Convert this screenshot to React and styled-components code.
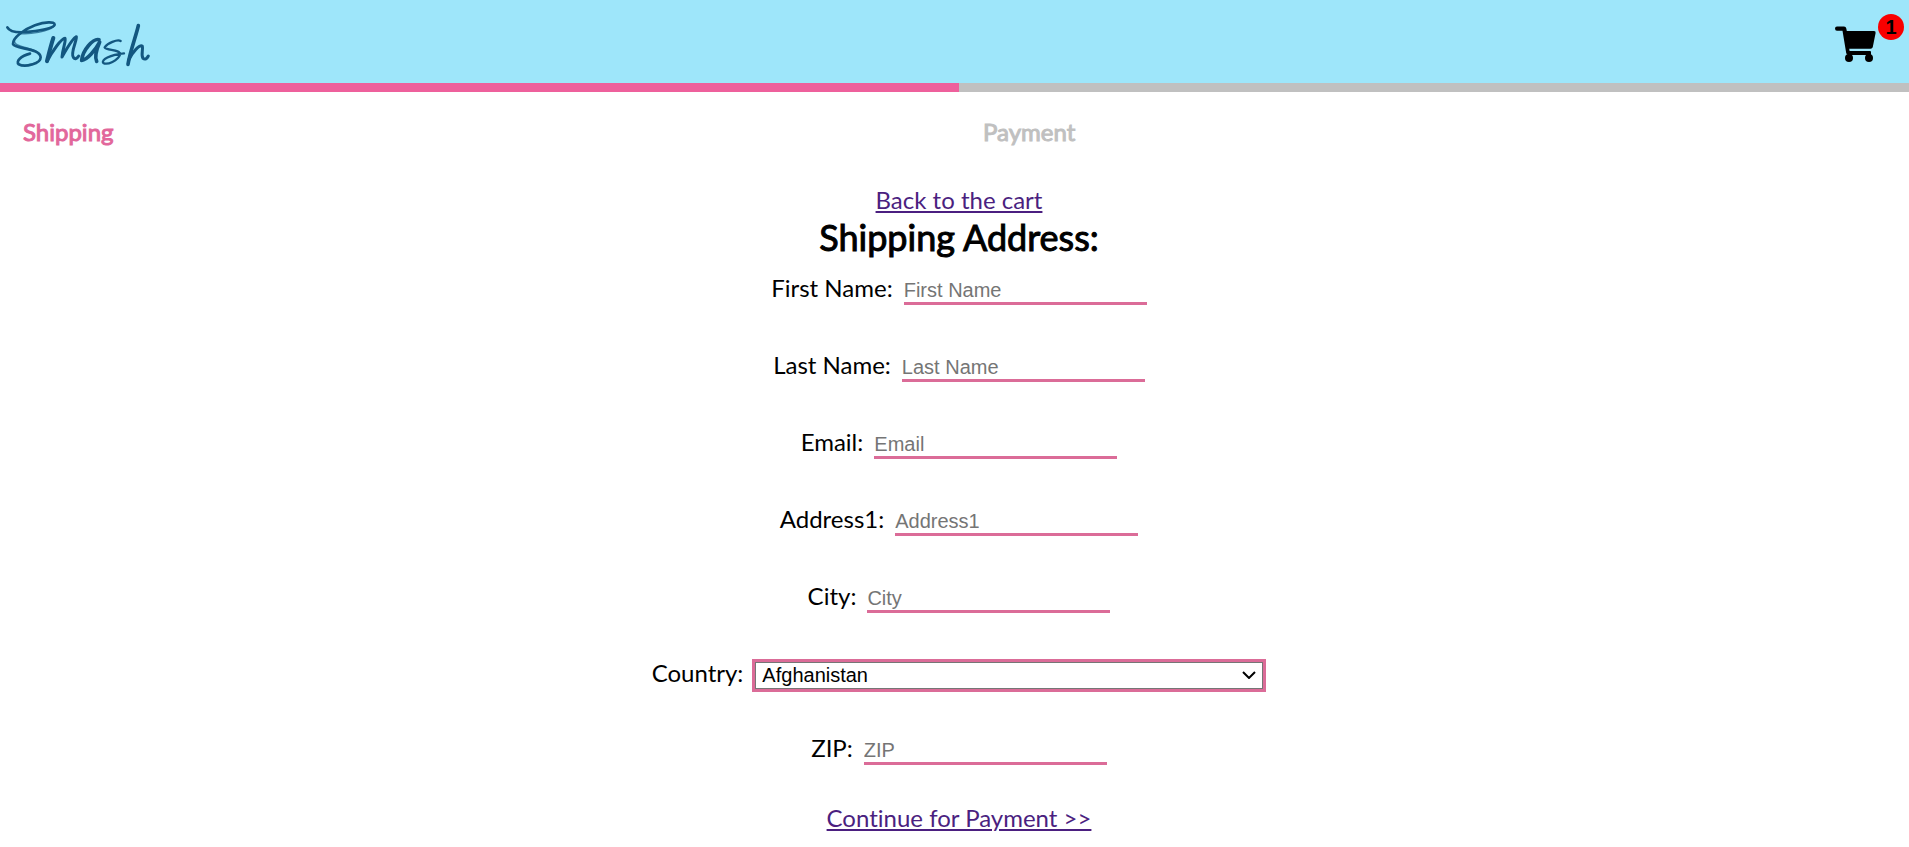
import React from "react";
import styled, { createGlobalStyle } from "styled-components";

const pink = "#db6c98";
const barPink = "#ee609c";

const GlobalStyle = createGlobalStyle`
  * { box-sizing: border-box; }
  body {
    margin: 0;
    background: #fff;
    color: #000;
    font-family: Lato, "Liberation Sans", sans-serif;
    font-size: 24px;
    line-height: 30px;
    font-variant-ligatures: none;
  }
`;

const Header = styled.header`
  display: flex;
  align-items: flex-start;
  justify-content: space-between;
  height: 83px;
  padding: 14px 5px 0 0;
  background: #9ee6fa;
`;

const LogoLink = styled.a`
  display: block;
  svg { display: block; }
`;

const CartButton = styled.button`
  display: flex;
  align-items: flex-start;
  gap: 2px;
  padding: 0;
  border: 0;
  background: none;
  color: #000;
  svg { margin-top: 12px; }
`;

const CartBadge = styled.span`
  width: 26px;
  height: 26px;
  border-radius: 50%;
  background: #f80000;
  font: 700 20px/26px "Liberation Sans", sans-serif;
  text-align: center;
`;

const Progress = styled.div`
  display: flex;
  height: 9px;
  padding-left: 9px;
  background: ${barPink};
`;

const ProgressPart = styled.div`
  flex: 1;
  background: ${({ $done }) => ($done ? barPink : "#c0c0c0")};
`;

const Steps = styled.ol`
  display: grid;
  grid-template-columns: 1fr 1fr;
  margin: 0;
  padding: 25px 0 38px 9px;
  list-style: none;
`;

const Step = styled.li`
  padding-left: ${({ $active }) => ($active ? "14px" : "24px")};
  color: ${({ $active }) => ($active ? "#e2679b" : "#c0c0c0")};
  -webkit-text-stroke: 1px currentColor;
`;

const Form = styled.form`
  display: flex;
  flex-direction: column;
  align-items: center;
  padding: 0 0 4px 9px;
`;

const TextLink = styled.a`
  color: #4b1f80;
`;

const Title = styled.h1`
  margin: 0 0 14px;
  font-size: 36px;
  font-weight: 400;
  line-height: 44px;
  -webkit-text-stroke: 1px currentColor;
`;

const Field = styled.div`
  display: flex;
  align-items: baseline;
  gap: ${({ $gap }) => $gap || 11}px;
  height: ${({ $height }) => $height || 77}px;
`;

const Input = styled.input`
  width: 243px;
  height: 26px;
  padding: 0;
  border: 0;
  border-bottom: 3px solid ${pink};
  background: transparent;
  font: 20px "Liberation Sans", sans-serif;
  outline: 0;
  &::placeholder { color: #757575; opacity: 1; }
`;

const SelectFrame = styled.div`
  display: grid;
  align-items: center;
  width: 514px;
  border: 3px solid ${pink};
`;

const Chevron = styled.svg`
  grid-area: 1 / 1;
  justify-self: end;
  margin-right: 7px;
  pointer-events: none;
`;

const Select = styled.select`
  grid-area: 1 / 1;
  appearance: none;
  width: 100%;
  height: 27px;
  padding: 0 26px 0 6px;
  border: 1px solid #767676;
  border-radius: 0;
  background: #fff;
  color: #000;
  font: 20px "Liberation Sans", sans-serif;
`;

const fields = [
  ["firstName", "First Name"],
  ["lastName", "Last Name"],
  ["email", "Email"],
  ["address1", "Address1"],
  ["city", "City"],
];

function TextField({ id, label, height }) {
  return (
    <Field $height={height}>
      <label htmlFor={id}>{label}:</label>
      <Input id={id} name={id} placeholder={label} />
    </Field>
  );
}

function Logo() {
  return (
    <svg width="160" height="60" viewBox="0 42 480 180" fill="none" stroke="#135780" strokeLinecap="round" strokeLinejoin="round" aria-hidden="true">
      <path strokeWidth="8" d="M22 82C30 98 55 99 90 95C125 91 160 84 164 74C164 64 135 65 105 76C70 89 38 114 39 132C44 148 120 143 122 172C122 192 75 203 56 193C47 184 62 168 90 161" />
      <path strokeWidth="4" opacity=".7" d="M60 101C88 104 145 96 163 78M44 122C38 143 112 142 119 164M54 187C62 200 105 195 120 180" />
      <path strokeWidth="12" d="M160 114C153 135 147 160 141 183" />
      <path strokeWidth="9" d="M141 185C155 155 185 115 195 115C199 122 188 145 186 171C198 150 218 114 229 110C233 116 210 160 220 172C225 179 231 176 236 168" />
      <path strokeWidth="11" d="M297 119C280 114 248 150 245 181C262 180 286 150 299 126C291 145 283 170 290 184" />
      <path strokeWidth="7" d="M362 123C352 117 322 130 314 142C320 152 362 147 360 164C354 182 322 196 310 189C302 180 330 164 372 160" />
      <path strokeWidth="11" d="M415 77C409 105 390 155 384 193" />
      <path strokeWidth="9" d="M386 180C398 155 418 134 427 138C430 150 422 165 429 175C435 180 441 176 445 168" />
    </svg>
  );
}

function CartIcon() {
  return (
    <svg width="41" height="37" viewBox="0 0 41 37" fill="currentColor" aria-hidden="true">
      <path d="M2 .5H9Q11 .5 11.3 2.5L11.8 5H39Q41 5 40.6 7L37.8 21Q37.4 22.8 35.6 22.8H14.2L14.6 25H35Q36 25 36 26V29H13.5Q11.5 29 11.2 27L7.5 4.8H2Q0 4.8 0 2.6Q0 .5 2 .5Z" />
      <circle cx="14" cy="32" r="4" />
      <circle cx="34" cy="32" r="4" />
    </svg>
  );
}

export default function App() {
  return (
    <>
      <GlobalStyle />
      <Header>
        <LogoLink href="#home" aria-label="Smash"><Logo /></LogoLink>
        <CartButton type="button" aria-label="Cart">
          <CartIcon />
          <CartBadge>1</CartBadge>
        </CartButton>
      </Header>
      <Progress>
        <ProgressPart $done />
        <ProgressPart />
      </Progress>
      <main>
        <Steps>
          <Step $active>Shipping</Step>
          <Step>Payment</Step>
        </Steps>
        <Form>
          <TextLink href="#cart">Back to the cart</TextLink>
          <Title>Shipping Address:</Title>
          {fields.map(([id, label]) => <TextField key={id} id={id} label={label} />)}
          <Field $gap={9} $height={75}>
            <label htmlFor="country">Country:</label>
            <SelectFrame>
              <Select id="country" name="country"><option>Afghanistan</option></Select>
              <Chevron width="14" height="8" viewBox="0 0 14 8" fill="none" stroke="#000" strokeWidth="2"><path d="M1 1l6 6 6-6" /></Chevron>
            </SelectFrame>
          </Field>
          <TextField id="zip" label="ZIP" height={70} />
          <TextLink href="#payment">Continue for Payment &gt;&gt;</TextLink>
        </Form>
      </main>
    </>
  );
}
